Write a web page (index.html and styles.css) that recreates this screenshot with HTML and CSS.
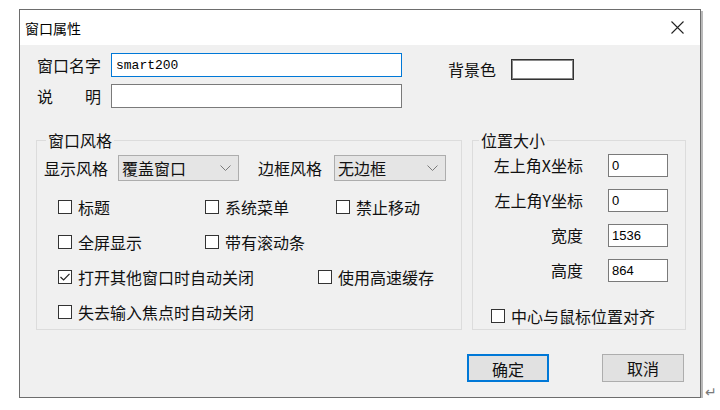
FILE: index.html
```html
<!DOCTYPE html>
<html lang="zh-CN">
<head>
    <meta charset="UTF-8" />
    <meta name="viewport" content="width=device-width, initial-scale=1.0" />
    <title>窗口属性</title>
    <link rel="stylesheet" href="styles.css">
</head>
<body>
    <div class="page">
        <div class="dialog">
            <div class="titlebar">
                <span>窗口属性</span>
                <svg class="close" width="13" height="13" viewBox="0 0 13 13">
                    <path d="M0.5 0.5 L12.5 12.5 M12.5 0.5 L0.5 12.5" stroke="#222" stroke-width="1.1" fill="none"/>
                </svg>
            </div>

            <div class="body">
                <div class="top">
                    <div class="fields">
                        <label for="winName">窗口名字</label>
                        <input type="text" id="winName" class="focused mono" value="smart200">
                        <label for="winDesc" class="spread"><span>说</span><span>明</span></label>
                        <input type="text" id="winDesc">
                    </div>
                    <div class="bgcolor">
                        <span>背景色</span>
                        <div class="swatch"></div>
                    </div>
                </div>

                <div class="groups">
                    <fieldset class="group-style">
                        <legend>窗口风格</legend>
                        <div class="style-row">
                            <span class="select-label">显示风格</span>
                            <div class="select sel-show">
                                <span>覆盖窗口</span>
                                <svg width="11" height="6" viewBox="0 0 11 6"><path d="M0.5 0.5 L5.5 5.5 L10.5 0.5" stroke="#7a7a7a" fill="none"/></svg>
                            </div>
                            <span class="select-label second">边框风格</span>
                            <div class="select sel-border">
                                <span>无边框</span>
                                <svg width="11" height="6" viewBox="0 0 11 6"><path d="M0.5 0.5 L5.5 5.5 L10.5 0.5" stroke="#7a7a7a" fill="none"/></svg>
                            </div>
                        </div>

                        <div class="checks">
                            <div class="check-row">
                                <div class="check w1"><span class="box"></span>标题</div>
                                <div class="check w2"><span class="box"></span>系统菜单</div>
                                <div class="check"><span class="box"></span>禁止移动</div>
                            </div>
                            <div class="check-row">
                                <div class="check w1"><span class="box"></span>全屏显示</div>
                                <div class="check"><span class="box"></span>带有滚动条</div>
                            </div>
                            <div class="check-row">
                                <div class="check w3">
                                    <span class="box">
                                        <svg width="12" height="12" viewBox="0 0 12 12"><path d="M1.5 6 L4.6 9 L10.5 2.8" stroke="#222" stroke-width="1.2" fill="none"/></svg>
                                    </span>打开其他窗口时自动关闭
                                </div>
                                <div class="check"><span class="box"></span>使用高速缓存</div>
                            </div>
                            <div class="check-row">
                                <div class="check"><span class="box"></span>失去输入焦点时自动关闭</div>
                            </div>
                        </div>
                    </fieldset>

                    <fieldset class="group-pos">
                        <legend>位置大小</legend>
                        <div class="pos">
                            <label for="posX">左上角X坐标</label>
                            <input type="text" id="posX" class="num" value="0">
                            <label for="posY">左上角Y坐标</label>
                            <input type="text" id="posY" class="num" value="0">
                            <label for="posW">宽度</label>
                            <input type="text" id="posW" class="num" value="1536">
                            <label for="posH">高度</label>
                            <input type="text" id="posH" class="num" value="864">
                        </div>
                        <div class="check center-check"><span class="box"></span>中心与鼠标位置对齐</div>
                    </fieldset>
                </div>

                <div class="actions">
                    <button type="button" class="primary">确定</button>
                    <button type="button">取消</button>
                </div>
            </div>
        </div>
        <span class="return-mark">↵</span>
    </div>
</body>
</html>
```

FILE: styles.css
```css
body {
    margin: 0;
    font-family: "Noto Sans CJK SC", "Noto Sans", sans-serif;
    font-size: 16px;
    color: #111;
    background: #fff;
}
.page {
    display: flex;
    align-items: flex-end;
    padding: 9px 0 0 19px;
}
.dialog {
    width: 680px;
    border: 1px solid #6d6d6d;
    box-shadow: 2px 2px 0 #b9b9b9;
    background: #f0f0f0;
}
.titlebar {
    height: 35px;
    background: #fff;
    display: flex;
    align-items: center;
    justify-content: space-between;
    padding: 0 16px 0 5px;
    font-size: 14px;
    color: #000;
}
.body {
    padding: 8px 14px 15px 16px;
}

/* top fields */
.top {
    display: flex;
    align-items: flex-start;
}
.fields {
    display: grid;
    grid-template-columns: 74px 291px;
    row-gap: 7px;
    align-items: center;
    padding-left: 1px;
}
.spread {
    display: flex;
    justify-content: space-between;
    width: 64px;
}
input {
    box-sizing: border-box;
    height: 24px;
    margin: 0;
    padding: 0 4px;
    border: 1px solid #7a7a7a;
    background: #fff;
    font-family: "Liberation Sans", sans-serif;
    font-size: 13px;
    color: #000;
    outline: none;
}
input.focused {
    border-color: #0078d7;
}
input.mono {
    font-family: "Liberation Mono", monospace;
}
.bgcolor {
    display: flex;
    align-items: center;
    gap: 15px;
    margin: 4px 0 0 46px;
}
.swatch {
    box-sizing: border-box;
    width: 63px;
    height: 21px;
    border: 1px solid #333;
    box-shadow: inset 0 0 0 1px #8a8a8a;
    background: #fff;
}

/* group boxes */
.groups {
    display: flex;
    gap: 10px;
    margin-top: 22px;
}
fieldset {
    margin: 0;
    padding: 0;
    border: 1px solid #dcdcdc;
    min-width: 0;
}
legend {
    padding: 0 2px;
    line-height: 20px;
}
.group-style {
    width: 426px;
    box-sizing: border-box;
}
.group-style legend {
    margin-left: 9px;
}
.group-pos {
    width: 214px;
    box-sizing: border-box;
}
.group-pos legend {
    margin-left: 6px;
}
.style-row {
    display: flex;
    align-items: center;
    margin-top: 5px;
    padding-left: 7px;
}
.select-label {
    margin-right: 10px;
}
.select-label.second {
    margin-left: 19px;
    margin-right: 12px;
}
.select {
    box-sizing: border-box;
    height: 26px;
    display: flex;
    align-items: center;
    justify-content: space-between;
    padding: 0 7px 0 3px;
    border: 1px solid #adadad;
    background: #e5e5e5;
}
.sel-show {
    width: 121px;
}
.sel-border {
    width: 112px;
}
.checks {
    margin-top: 8px;
    padding-left: 21px;
}
.check-row {
    display: flex;
    align-items: center;
    height: 35px;
}
.check {
    display: flex;
    align-items: center;
    gap: 6px;
    white-space: nowrap;
}
.w1 {
    width: 147px;
}
.w2 {
    width: 131px;
}
.w3 {
    width: 260px;
}
.box {
    box-sizing: border-box;
    width: 14px;
    height: 14px;
    border: 1px solid #333;
    background: #fff;
    display: flex;
    align-items: center;
    justify-content: center;
}

/* position group */
.pos {
    display: grid;
    grid-template-columns: 90px 60px;
    column-gap: 25px;
    row-gap: 11px;
    align-items: center;
    padding: 3px 0 0 20px;
}
.pos label {
    text-align: right;
    white-space: nowrap;
}
.pos input {
    height: 23px;
    padding: 0 3px;
}
.center-check {
    margin: 22px 0 0 18px;
}

/* buttons */
.actions {
    display: flex;
    justify-content: flex-end;
    gap: 53px;
    margin-top: 24px;
    padding-right: 2px;
}
button {
    box-sizing: border-box;
    width: 82px;
    height: 28px;
    margin: 0;
    border: 1px solid #adadad;
    background: #e1e1e1;
    font-family: inherit;
    font-size: 16px;
    color: #111;
}
button.primary {
    border: 2px solid #0078d7;
}
.return-mark {
    margin-left: 4px;
    font-size: 14px;
    line-height: 14px;
    color: #7a7a7a;
}
```
